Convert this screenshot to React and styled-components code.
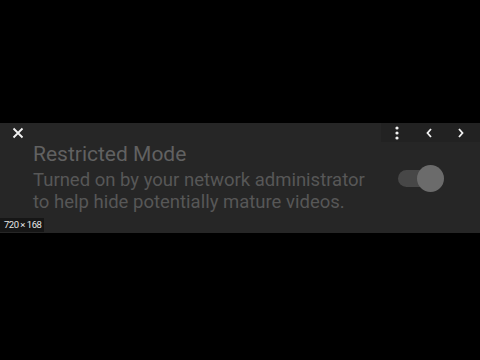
import React from "react";
import styled, { createGlobalStyle } from "styled-components";

const Global = createGlobalStyle`
  html, body { margin: 0; padding: 0; background: #000; }
  body { font-family: Roboto, "Noto Sans", sans-serif; }
`;

const Page = styled.div`
  width: 480px;
  height: 360px;
  background: #000;
  padding-top: 123px;
  box-sizing: border-box;
`;

const Banner = styled.section`
  position: relative;
  height: 110px;
  background: #262626;
  display: flex;
  flex-direction: column;
`;

const TopBar = styled.div`
  display: flex;
  justify-content: space-between;
  align-items: flex-start;
  height: 19px;
`;

const CloseBtn = styled.div`
  padding: 1px 0 0 12px;
  color: #f2f2f2;
`;

const Actions = styled.div`
  display: flex;
  align-items: center;
  height: 19px;
  padding: 0 3px 0 0;
  background: #222222;
`;

const ActionIcon = styled.div`
  width: 32px;
  display: flex;
  justify-content: center;
  color: #f2f2f2;
`;

const Body = styled.div`
  display: flex;
  align-items: flex-start;
  justify-content: space-between;
  padding: 0 48px 0 33px;
`;

const Texts = styled.div`
  display: flex;
  flex-direction: column;
`;

const Title = styled.h2`
  margin: 0;
  font-size: 21px;
  font-weight: 400;
  line-height: 24px;
  color: #616161;
`;

const Desc = styled.p`
  margin: 0;
  font-size: 18.5px;
  line-height: 22px;
  color: #575757;
  &:first-of-type { margin-top: 3px; }
`;

const Toggle = styled.div`
  position: relative;
  width: 34px;
  height: 17px;
  margin-top: 28px;
  border-radius: 9px;
  background: #474747;
`;

const Knob = styled.div`
  position: absolute;
  right: -12px;
  top: -5px;
  width: 27px;
  height: 27px;
  border-radius: 50%;
  background: #6b6b6b;
`;

const SizeBadge = styled.div`
  position: absolute;
  left: 0;
  bottom: 1px;
  padding: 1px 3px 1px 4px;
  background: #161616;
  color: #e6e6e6;
  font-size: 9.5px;
  letter-spacing: -0.5px;
  line-height: 12px;
`;

export default function App() {
  return (
    <>
      <Global />
      <Page>
        <Banner>
          <TopBar>
            <CloseBtn>
              <svg width="12" height="12" viewBox="0 0 12 12">
                <path d="M1.5 1.5 L10.5 10.5 M10.5 1.5 L1.5 10.5" stroke="currentColor" strokeWidth="1.8" />
              </svg>
            </CloseBtn>
            <Actions>
              <ActionIcon>
                <svg width="4" height="14" viewBox="0 0 4 14">
                  <circle cx="2" cy="2" r="1.6" fill="currentColor" />
                  <circle cx="2" cy="7" r="1.6" fill="currentColor" />
                  <circle cx="2" cy="12" r="1.6" fill="currentColor" />
                </svg>
              </ActionIcon>
              <ActionIcon>
                <svg width="8" height="12" viewBox="0 0 8 12">
                  <path d="M6 2 L2.5 6 L6 10" stroke="currentColor" strokeWidth="1.8" fill="none" />
                </svg>
              </ActionIcon>
              <ActionIcon>
                <svg width="8" height="12" viewBox="0 0 8 12">
                  <path d="M2 2 L5.5 6 L2 10" stroke="currentColor" strokeWidth="1.8" fill="none" />
                </svg>
              </ActionIcon>
            </Actions>
          </TopBar>
          <Body>
            <Texts>
              <Title>Restricted Mode</Title>
              <Desc>Turned on by your network administrator</Desc>
              <Desc>to help hide potentially mature videos.</Desc>
            </Texts>
            <Toggle>
              <Knob />
            </Toggle>
          </Body>
          <SizeBadge>720 × 168</SizeBadge>
        </Banner>
      </Page>
    </>
  );
}
